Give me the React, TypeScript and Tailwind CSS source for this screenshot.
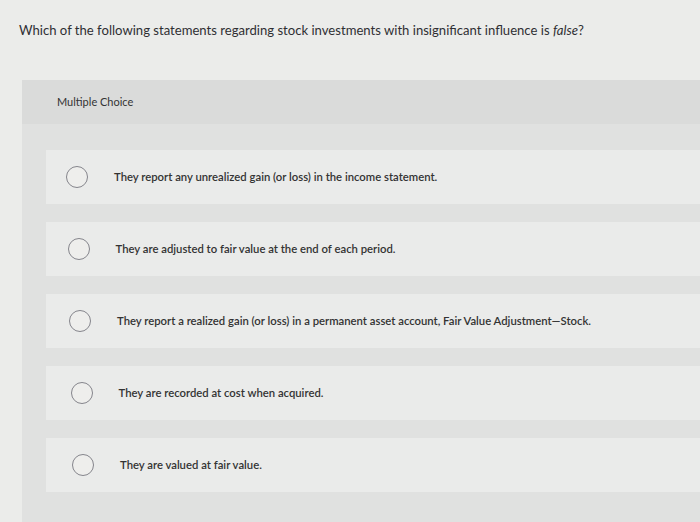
import React from "react";

const options = [
  "They report any unrealized gain (or loss) in the income statement.",
  "They are adjusted to fair value at the end of each period.",
  "They report a realized gain (or loss) in a permanent asset account, Fair Value Adjustment\u2014Stock.",
  "They are recorded at cost when acquired.",
  "They are valued at fair value.",
];

export default function App() {
  return (
    <div
      className="w-[700px] h-[522px] overflow-hidden bg-[#ebecea] text-[#2f2f33]"
      style={{ fontFamily: "Lato, 'Open Sans', sans-serif" }}
    >
      <div className="pt-[21px] pl-[19px] text-[13.1px] leading-[18px]">
        Which of the following statements regarding stock investments with insignificant influence is{" "}
        <i>false</i>?
      </div>
      <div className="ml-[22px] mt-[41px] bg-[#e0e1e0] h-[600px]">
        <div className="h-[44px] bg-[#dadbda] pl-[35px] flex items-center text-[11px] text-[#333]">
          Multiple Choice
        </div>
        <div className="pl-[24px] pt-[26px] flex flex-col gap-[18px]">
          {options.map((o, i) => (
            <div
              key={i}
              className="h-[54px] bg-[#eaebea] flex items-center"
              style={{ paddingLeft: 20 + i * 1.5 }}
            >
              <div className="w-[22px] h-[22px] rounded-full border-[1.5px] border-[#85858c] bg-[#eeeeec] shrink-0" />
              <div className="ml-[26px] text-[11.3px] font-semibold text-[#333]">{o}</div>
            </div>
          ))}
        </div>
      </div>
    </div>
  );
}
